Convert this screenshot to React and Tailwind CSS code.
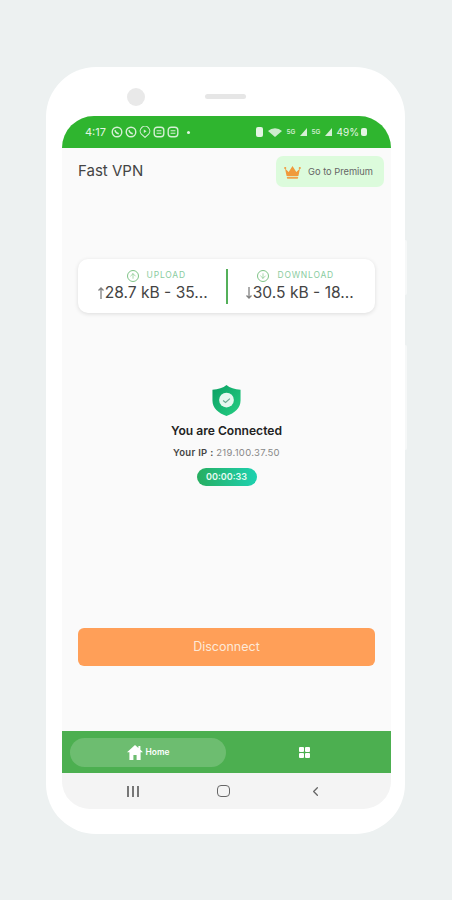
import { ArrowUp, ArrowDown, ChevronLeft } from "lucide-react";

const font = "font-['Inter','Liberation_Sans',sans-serif]";

const MessageIcon = ({ inner }) => (
  <svg className="w-[12px] h-[12px]" viewBox="0 0 12 12" fill="none" stroke="#d5efd5" strokeWidth="1.4">
    {inner === "round" ? (
      <>
        <circle cx="6" cy="6" r="4.8" />
        <path d="M4 4.2c.3 2.1 1.6 3.2 3.8 3.6" />
      </>
    ) : inner === "play" ? (
      <>
        <path d="M6 11.4 2.4 8.2a4.8 4.8 0 1 1 7.2 0z" strokeWidth="1.1" />
        <path d="M4.8 3.6v3.4l2.8-1.7z" fill="#d5efd5" stroke="none" />
      </>
    ) : (
      <>
        <rect x="1.2" y="1.2" width="9.6" height="9.6" rx="3" />
        <path d="M3.6 4.8h4.8M3.6 7.2h4.8" strokeWidth="1.1" />
      </>
    )}
  </svg>
);

const Signal = () => (
  <span className="flex items-end gap-[1px]">
    <span className="text-[6.5px] leading-[8px] font-semibold text-[#cdeccd] w-[12px]">5G</span>
    <svg className="w-[7px] h-[8px]" viewBox="0 0 7 8">
      <path d="M7 0v8H0z" fill="#d5efd5" />
    </svg>
  </span>
);

const StatusBar = () => (
  <div className="h-[32px] shrink-0 bg-[#2fb52f] flex items-center justify-between pl-[23px] pr-[24px]">
    <div className="flex items-center gap-[2px]">
      <span className="text-[11px] text-[#e3f5e3] mr-[3px]">4:17</span>
      <MessageIcon inner="round" />
      <MessageIcon inner="round" />
      <MessageIcon inner="play" />
      <MessageIcon />
      <MessageIcon />
      <span className="w-[3px] h-[3px] rounded-full bg-[#e3f5e3] ml-[6px]" />
    </div>
    <div className="flex items-center gap-[5px]">
      <span className="w-[7px] h-[10px] rounded-[2px] bg-[#e3f5e3]" />
      <svg className="w-[14px] h-[9px]" viewBox="0 0 14 9">
        <path d="M0 3a10.5 10.5 0 0 1 14 0L7 9z" fill="#cdeccd" />
      </svg>
      <Signal />
      <Signal />
      <span className="text-[10px] text-[#e3f5e3]">49%</span>
      <span className="w-[6px] h-[8px] rounded-[2px] bg-[#e3f5e3] -ml-[3px]" />
    </div>
  </div>
);

const Crown = () => (
  <svg className="w-[17px] h-[14px]" viewBox="0 0 17 14">
    <path d="M1 3.5 4.7 7 8.5 1l3.8 6L16 3.5 14.4 11H2.6z" fill="#f09a3c" />
    <rect x="2.8" y="11.8" width="11.4" height="2" rx="1" fill="#f2a24a" />
    <circle cx="1.2" cy="3" r="1.1" fill="#f09a3c" />
    <circle cx="15.8" cy="3" r="1.1" fill="#f09a3c" />
  </svg>
);

const Header = () => (
  <div className="flex items-center justify-between pl-[16px] pr-[7px] pt-[8px]">
    <span className="text-[15px] text-[#444]">Fast VPN</span>
    <div className="w-[108px] h-[31px] rounded-[7px] bg-[#dcfbdc] flex items-center gap-[7px] pl-[8px]">
      <Crown />
      <span className="text-[9.3px] text-[#666]">Go to Premium</span>
    </div>
  </div>
);

const SpeedColumn = ({ label, Icon, arrow, value, labelClass, valueClass }) => (
  <div className="flex-1 min-w-0 flex flex-col items-center">
    <div className={`flex items-center gap-[8px] h-[12px] ${labelClass}`}>
      <span className="w-[12px] h-[12px] rounded-full border border-[#7fc487] flex items-center justify-center">
        <Icon className="w-[8px] h-[8px] text-[#7fc487]" strokeWidth={2} />
      </span>
      <span className="text-[8.5px] tracking-[0.8px] text-[#8acca0]">{label}</span>
    </div>
    <div className={`flex items-center text-[15.6px] leading-[20px] text-[#444] mt-[1px] ${valueClass}`}>
      <svg className="w-[8px] h-[14px]" viewBox="0 0 8 14" fill="none" stroke="#808080" strokeWidth="1.3">
        <path d={arrow} />
      </svg>
      <span>{value}</span>
    </div>
  </div>
);

const SpeedCard = () => (
  <div className="mx-[16px] mt-[72px] h-[54px] rounded-[10px] bg-white shadow-[0_1px_4px_rgba(0,0,0,0.12)] flex items-center">
    <SpeedColumn label="UPLOAD" Icon={ArrowUp} arrow="M4 13V2M1.5 4.5 4 2l2.5 2.5" value="28.7 kB - 35..." labelClass="pl-[9px]" valueClass="pl-[1px]" />
    <span className="w-[2px] h-[35px] bg-[#54b05a] shrink-0" />
    <SpeedColumn label="DOWNLOAD" Icon={ArrowDown} arrow="M4 1v11M1.5 9.5 4 12l2.5-2.5" value="30.5 kB - 18..." labelClass="pr-[11px]" valueClass="pr-[4px]" />
  </div>
);

const Shield = () => (
  <svg className="w-[29px] h-[31px]" viewBox="0 0 29 32">
    <defs>
      <linearGradient id="shieldFill" x1="0" y1="0" x2="1" y2="1">
        <stop offset="0" stopColor="#0a9f62" />
        <stop offset="1" stopColor="#27cf84" />
      </linearGradient>
    </defs>
    <path d="M14.5 0C18 3 23 4.6 29 5v11c0 8-6 13-14.5 16C6 29 0 24 0 16V5C6 4.6 11 3 14.5 0z" fill="url(#shieldFill)" />
    <circle cx="14.5" cy="15.5" r="7.6" fill="#e6f7ef" />
    <path d="M11 16l2.5 2 4.5-4" fill="none" stroke="#6aa892" strokeWidth="1.2" />
  </svg>
);

const Status = () => (
  <div className="flex flex-col items-center mt-[72px]">
    <Shield />
    <div className="text-[12.1px] leading-[14px] font-semibold text-[#222] mt-[8px]">You are Connected</div>
    <div className="text-[9.5px] tracking-[0.3px] leading-[12px] mt-[9px] text-[#888]">
      <span className="font-semibold text-[#444]">Your IP : </span>219.100.37.50
    </div>
    <div className="w-[60px] h-[18px] rounded-full bg-gradient-to-r from-[#27ae60] to-[#1dd1b0] text-[#e8fbf3] text-[9px] font-semibold flex items-center justify-center mt-[9px]">
      00:00:33
    </div>
  </div>
);

const BottomNav = () => (
  <div className="h-[42px] shrink-0 bg-[#4caf50] flex items-center pl-[8px]">
    <div className="w-[156px] h-[29px] rounded-full bg-[#6dbd70] flex items-center justify-center gap-[3px]">
      <svg className="w-[16px] h-[15px]" viewBox="0 0 16 15">
        <path d="M8 0 0 7.2h2.4V15h4V10h3.2v5h4V7.2H16l-2.6-2.4V1h-2v2z" fill="white" />
      </svg>
      <span className="text-[8.4px] font-semibold text-white">Home</span>
    </div>
    <div className="flex-1 flex justify-center pr-[8px]">
      <div className="grid grid-cols-2 gap-[1px] w-[11px]">
        <span className="h-[5px] bg-white rounded-[1px]" />
        <span className="h-[5px] bg-white rounded-[1px]" />
        <span className="h-[5px] bg-white rounded-[1px]" />
        <span className="h-[5px] bg-white rounded-[1px]" />
      </div>
    </div>
  </div>
);

const SystemNav = () => (
  <div className="h-[36px] shrink-0 bg-[#f4f4f4] flex items-center justify-between pl-[65px] pr-[68px]">
    <div className="flex gap-[3.5px]">
      <span className="w-[1.5px] h-[11px] bg-[#777]" />
      <span className="w-[1.5px] h-[11px] bg-[#777]" />
      <span className="w-[1.5px] h-[11px] bg-[#777]" />
    </div>
    <span className="w-[13px] h-[12px] rounded-[4px] border-[1.5px] border-[#666]" />
    <ChevronLeft className="w-[15px] h-[15px] text-[#666]" strokeWidth={2} />
  </div>
);

export default function App() {
  return (
    <div className={`${font} w-[452px] h-[900px] bg-[#edf1f1] pt-[67px] pl-[46px] overflow-hidden`}>
      <div className="relative w-[359px] h-[767px] rounded-[50px] bg-white flex flex-col px-[16px]">
        {/* side buttons */}
        <span className="absolute -right-[2px] top-[173px] w-[2px] h-[55px] bg-[#f6f8f8] rounded-r" />
        <span className="absolute -right-[2px] top-[278px] w-[2px] h-[105px] bg-[#f6f8f8] rounded-r" />

        <div className="h-[49px] shrink-0 flex items-start pt-[21px]">
          <span className="w-[18px] h-[18px] rounded-full bg-[#e9e9e9] ml-[65px]" />
          <span className="w-[41px] h-[5px] rounded-full bg-[#e6e6e6] ml-[60px] mt-[6px]" />
        </div>

        <div className="w-[329px] h-[693px] rounded-t-[32px] rounded-b-[28px] overflow-hidden bg-[#fafafa] flex flex-col">
          <StatusBar />
          <div className="flex-1 flex flex-col">
            <Header />
            <SpeedCard />
            <Status />
            <div className="mx-[16px] mt-[142px] h-[38px] rounded-[6px] bg-[#ff9f58] flex items-center justify-center pt-[1px] text-[12.5px] text-[#fde9d8]">
              Disconnect
            </div>
          </div>
          <BottomNav />
          <SystemNav />
        </div>
      </div>
    </div>
  );
}
